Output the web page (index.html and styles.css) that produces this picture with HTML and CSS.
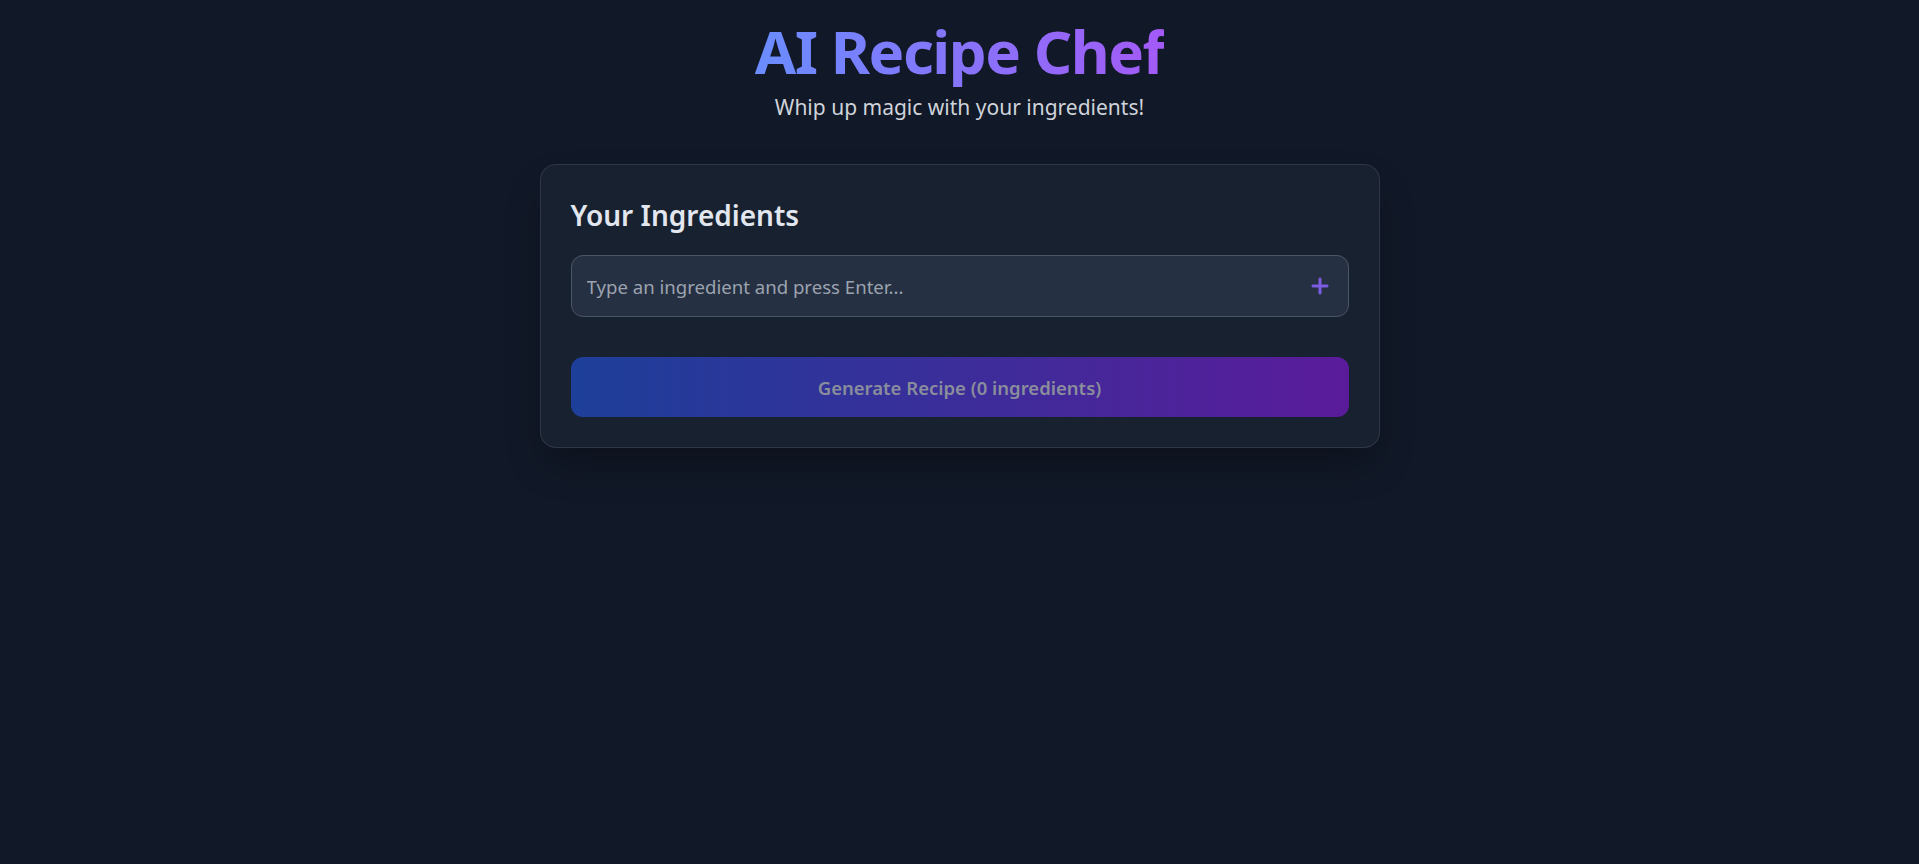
FILE: index.html
```html
<!DOCTYPE html>
<html>
<head>
    <meta charset="UTF-8">
    <meta name="viewport" content="width=device-width, initial-scale=1.0">
    <title>AI Recipe Chef</title>
    <link rel="stylesheet" href="styles.css">
</head>
<body>
    <div class="page">
        <header class="header">
            <h1 class="title">AI Recipe Chef</h1>
            <p class="subtitle">Whip up magic with your ingredients!</p>
        </header>

        <div class="card">
            <h2 class="card-title">Your Ingredients</h2>
            <div class="input-row">
                <input type="text" id="ingredient" placeholder="Type an ingredient and press Enter...">
                <button class="add-btn" aria-label="Add ingredient">
                    <svg width="20" height="20" viewBox="0 0 20 20" fill="none" stroke="currentColor" stroke-width="3" stroke-linecap="round">
                        <path d="M10 3v14M3 10h14"/>
                    </svg>
                </button>
            </div>
            <button class="generate-btn" disabled>Generate Recipe (0 ingredients)</button>
        </div>
    </div>
</body>
</html>
```

FILE: styles.css
```css
:root {
    --background: #111827;
    --card: rgba(31, 41, 55, 0.5);
    --card-border: rgba(75, 85, 99, 0.45);
    --input: #253042;
    --input-border: #4b5563;
    --text: #e2e6ee;
    --text-light: #cfd3da;
    --placeholder: #9ca3af;
}

* {
    margin: 0;
    padding: 0;
    box-sizing: border-box;
}

body {
    font-family: 'Noto Sans', 'Open Sans', sans-serif;
    background-color: var(--background);
    color: var(--text);
    min-height: 100vh;
}

.page {
    display: flex;
    flex-direction: column;
    align-items: center;
    padding-top: 15px;
}

.header {
    text-align: center;
}

.title {
    font-size: 60px;
    line-height: 72px;
    font-weight: 700;
    letter-spacing: -1.5px;
    background: linear-gradient(90deg, #6a8dff, #a35af6);
    -webkit-background-clip: text;
    background-clip: text;
    color: transparent;
}

.subtitle {
    margin-top: 6px;
    font-size: 21px;
    line-height: 28px;
    color: var(--text-light);
}

.card {
    margin-top: 43px;
    width: 840px;
    padding: 30px;
    background: var(--card);
    border: 1px solid var(--card-border);
    border-radius: 16px;
    box-shadow: 0 20px 40px -10px rgba(0, 0, 0, 0.35);
}

.card-title {
    font-size: 28px;
    line-height: 40px;
    font-weight: 600;
    color: var(--text);
}

.input-row {
    position: relative;
    margin-top: 20px;
}

.input-row input {
    width: 100%;
    height: 62px;
    padding: 0 56px 0 15px;
    background: var(--input);
    border: 1px solid var(--input-border);
    border-radius: 12px;
    font-family: inherit;
    font-size: 18.6px;
    color: var(--text);
    outline: none;
}

.input-row input::placeholder {
    color: var(--placeholder);
}

.add-btn {
    position: absolute;
    right: 19px;
    top: 50%;
    transform: translateY(-50%);
    display: flex;
    background: none;
    border: none;
    color: #7b5ce2;
    cursor: pointer;
}

.generate-btn {
    width: 100%;
    height: 60px;
    margin-top: 40px;
    border: none;
    border-radius: 12px;
    background: linear-gradient(90deg, #1d3f9a, #5a1b9a);
    font-family: inherit;
    font-size: 18.5px;
    font-weight: 600;
    color: #8a8d9b;
    cursor: not-allowed;
}
```
